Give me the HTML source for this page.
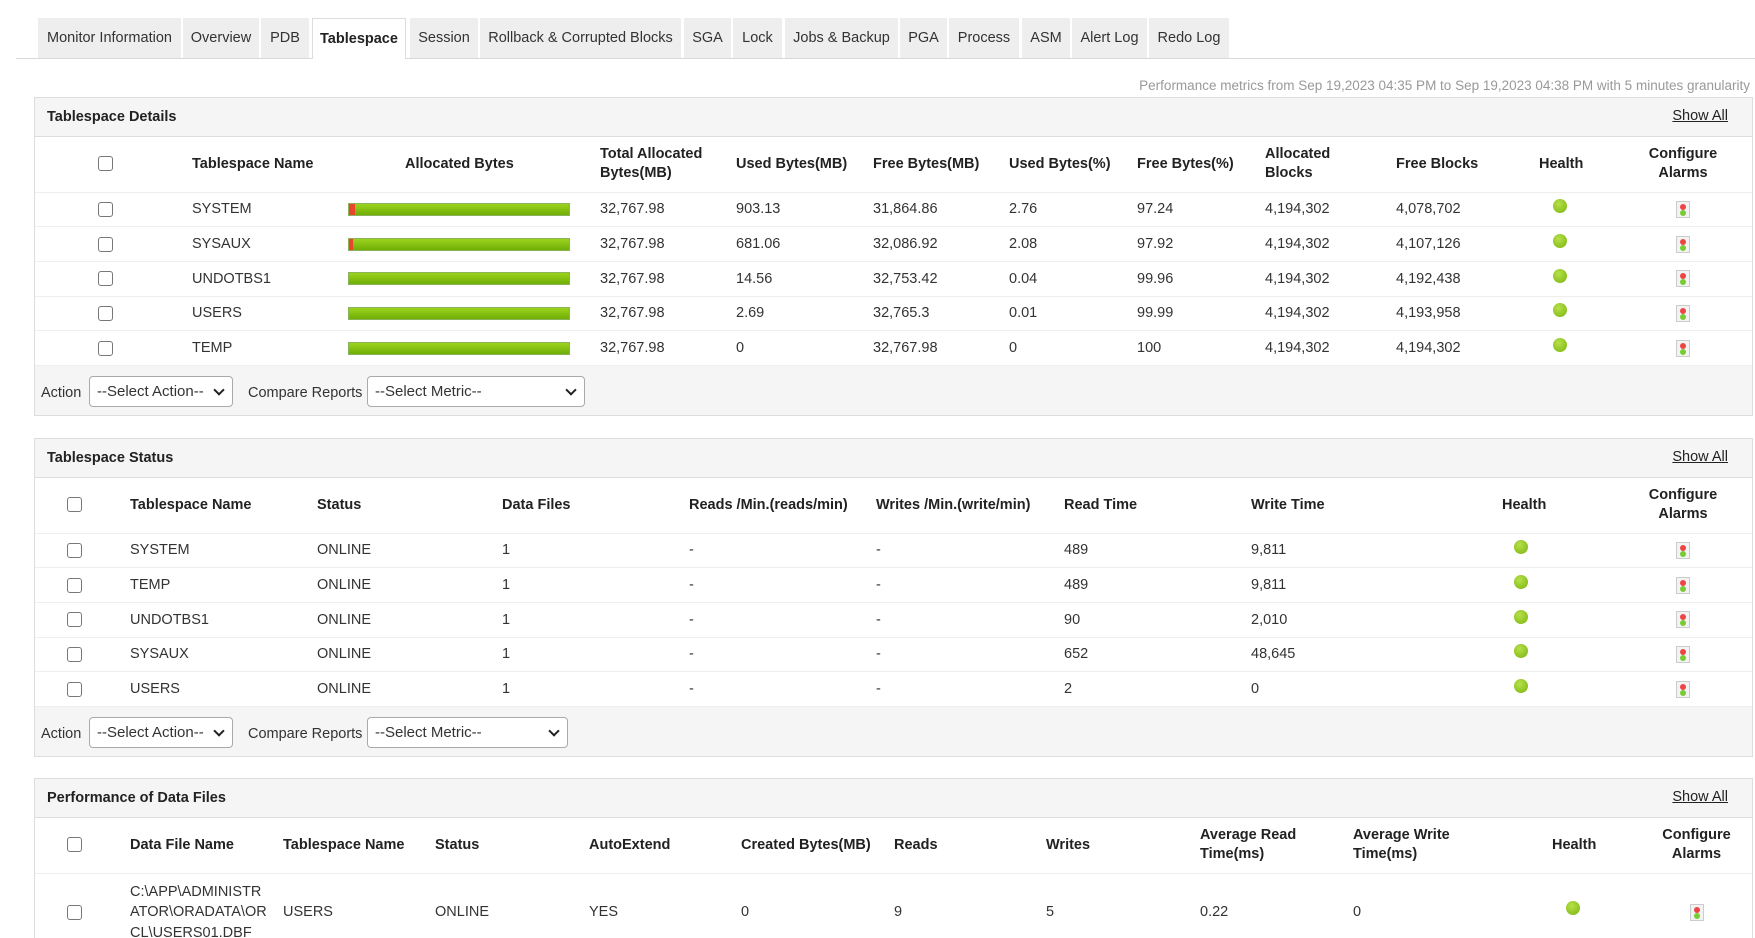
<!DOCTYPE html>
<html style="height:938px;overflow:hidden"><head><meta charset="utf-8"><style>
*{box-sizing:border-box;margin:0;padding:0}
body{width:1755px;height:938px;overflow:hidden;background:#fff;font-family:"Liberation Sans",Arial,sans-serif;font-size:14.5px;color:#333;position:relative}
.tabline{position:absolute;left:16px;right:0;top:58px;border-top:1px solid #d8d8d8}
.tab{position:absolute;top:18px;height:40px;line-height:40px;background:#eee;text-align:center;color:#333}
.tab.a{background:#fff;border:1px solid #ddd;border-bottom:none;font-weight:bold;height:41px;z-index:2;color:#222}
.info{position:absolute;right:5px;top:78px;color:#999;font-size:13.5px}
.panel{position:absolute;left:34px;width:1719px;border:1px solid #ddd}
.ph{height:39px;background:#f5f5f5;border-bottom:1px solid #ddd;position:relative}
.ph b{position:absolute;left:12px;top:11px;font-size:14.5px;color:#222}
.ph u{position:absolute;right:24px;top:10px;color:#222}
table{border-collapse:collapse;table-layout:fixed;width:1717px}
td,th{padding:0;text-align:left;vertical-align:middle;font-weight:normal}
th{font-weight:bold;color:#222;line-height:19px}
tr.h{height:55px}
tr.r{height:34.7px;border-top:1px solid #eee}
.cb{display:inline-block;width:15px;height:15px;border:1px solid #777;border-radius:3px;vertical-align:middle;background:#fff}
.bar{height:13px;width:222px;background:linear-gradient(#9cd21e,#6fae06);border:1px solid #8bb35a;position:relative}
.bar i{position:absolute;left:0;top:0;bottom:0;background:#e8452c}
.dot{display:inline-block;width:14px;height:14px;border-radius:50%;background:radial-gradient(circle at 40% 35%,#b6e04a,#7ab40e);position:relative;top:-1px}
.al{display:inline-block;width:14px;height:17px;border:1px solid #ccc;background:#f3f3f3;position:relative;vertical-align:middle}
.al:before{content:"";position:absolute;left:3px;top:2px;width:6px;height:6px;border-radius:50%;background:#e44}
.al:after{content:"";position:absolute;left:3px;top:8px;width:6px;height:6px;border-radius:50%;background:#7c3}
.c{text-align:center}
.act{height:50px;background:#f5f5f5;position:relative;border-top:1px solid #eee}
.act span{position:absolute;top:19px}
.sel{position:absolute;top:10px;height:31px;border:1px solid #aaa;border-radius:4px;background:#fff;padding-left:7px;line-height:29px;font-size:15px;color:#333}
.sel:after{content:"";position:absolute;right:9px;top:9px;width:6px;height:6px;border-right:2px solid #222;border-bottom:2px solid #222;transform:rotate(45deg)}
</style></head><body>
<div class="tabline"></div>
<div class="tab" style="left:38px;width:143px">Monitor Information</div>
<div class="tab" style="left:183px;width:76px">Overview</div>
<div class="tab" style="left:261px;width:48px">PDB</div>
<div class="tab a" style="left:312px;width:94px">Tablespace</div>
<div class="tab" style="left:410px;width:68px">Session</div>
<div class="tab" style="left:480px;width:201px">Rollback &amp; Corrupted Blocks</div>
<div class="tab" style="left:684px;width:47px">SGA</div>
<div class="tab" style="left:733px;width:49px">Lock</div>
<div class="tab" style="left:785px;width:113px">Jobs &amp; Backup</div>
<div class="tab" style="left:900px;width:47px">PGA</div>
<div class="tab" style="left:949px;width:70px">Process</div>
<div class="tab" style="left:1022px;width:48px">ASM</div>
<div class="tab" style="left:1072px;width:75px">Alert Log</div>
<div class="tab" style="left:1149px;width:80px">Redo Log</div>
<div class="info">Performance metrics from Sep 19,2023 04:35 PM to Sep 19,2023 04:38 PM with 5 minutes granularity</div>

<div class="panel" style="top:97px">
<div class="ph"><b>Tablespace Details</b><u>Show All</u></div>
<table>
<colgroup><col style="width:157px"><col style="width:156px"><col style="width:252px"><col style="width:136px"><col style="width:137px"><col style="width:136px"><col style="width:128px"><col style="width:128px"><col style="width:131px"><col style="width:115px"><col style="width:103px"><col style="width:138px"></colgroup>
<tr class="h"><th style="padding-left:63px"><span class="cb"></span></th><th>Tablespace Name</th><th style="padding-left:57px">Allocated Bytes</th><th>Total Allocated<br>Bytes(MB)</th><th>Used Bytes(MB)</th><th>Free Bytes(MB)</th><th>Used Bytes(%)</th><th>Free Bytes(%)</th><th>Allocated<br>Blocks</th><th>Free Blocks</th><th style="padding-left:28px">Health</th><th class="c">Configure<br>Alarms</th></tr>
<tr class="r"><td style="padding-left:63px"><span class="cb"></span></td><td>SYSTEM</td><td><div class="bar"><i style="width:6px"></i></div></td><td>32,767.98</td><td>903.13</td><td>31,864.86</td><td>2.76</td><td>97.24</td><td>4,194,302</td><td>4,078,702</td><td style="padding-left:42px"><span class="dot"></span></td><td class="c"><span class="al"></span></td></tr>
<tr class="r"><td style="padding-left:63px"><span class="cb"></span></td><td>SYSAUX</td><td><div class="bar"><i style="width:4px"></i></div></td><td>32,767.98</td><td>681.06</td><td>32,086.92</td><td>2.08</td><td>97.92</td><td>4,194,302</td><td>4,107,126</td><td style="padding-left:42px"><span class="dot"></span></td><td class="c"><span class="al"></span></td></tr>
<tr class="r"><td style="padding-left:63px"><span class="cb"></span></td><td>UNDOTBS1</td><td><div class="bar"></div></td><td>32,767.98</td><td>14.56</td><td>32,753.42</td><td>0.04</td><td>99.96</td><td>4,194,302</td><td>4,192,438</td><td style="padding-left:42px"><span class="dot"></span></td><td class="c"><span class="al"></span></td></tr>
<tr class="r"><td style="padding-left:63px"><span class="cb"></span></td><td>USERS</td><td><div class="bar"></div></td><td>32,767.98</td><td>2.69</td><td>32,765.3</td><td>0.01</td><td>99.99</td><td>4,194,302</td><td>4,193,958</td><td style="padding-left:42px"><span class="dot"></span></td><td class="c"><span class="al"></span></td></tr>
<tr class="r"><td style="padding-left:63px"><span class="cb"></span></td><td>TEMP</td><td><div class="bar"></div></td><td>32,767.98</td><td>0</td><td>32,767.98</td><td>0</td><td>100</td><td>4,194,302</td><td>4,194,302</td><td style="padding-left:42px"><span class="dot"></span></td><td class="c"><span class="al"></span></td></tr>
</table>
<div class="act"><span style="left:6px">Action</span><div class="sel" style="left:54px;width:144px">--Select Action--</div><span style="left:213px">Compare Reports</span><div class="sel" style="left:332px;width:218px">--Select Metric--</div></div>
</div>

<div class="panel" style="top:438px">
<div class="ph"><b>Tablespace Status</b><u>Show All</u></div>
<table>
<colgroup><col style="width:95px"><col style="width:187px"><col style="width:185px"><col style="width:187px"><col style="width:187px"><col style="width:188px"><col style="width:187px"><col style="width:220px"><col style="width:143px"><col style="width:138px"></colgroup>
<tr class="h"><th style="padding-left:32px"><span class="cb"></span></th><th>Tablespace Name</th><th>Status</th><th>Data Files</th><th>Reads /Min.(reads/min)</th><th>Writes /Min.(write/min)</th><th>Read Time</th><th>Write Time</th><th style="padding-left:31px">Health</th><th class="c">Configure<br>Alarms</th></tr>
<tr class="r"><td style="padding-left:32px"><span class="cb"></span></td><td>SYSTEM</td><td>ONLINE</td><td>1</td><td>-</td><td>-</td><td>489</td><td>9,811</td><td style="padding-left:43px"><span class="dot"></span></td><td class="c"><span class="al"></span></td></tr>
<tr class="r"><td style="padding-left:32px"><span class="cb"></span></td><td>TEMP</td><td>ONLINE</td><td>1</td><td>-</td><td>-</td><td>489</td><td>9,811</td><td style="padding-left:43px"><span class="dot"></span></td><td class="c"><span class="al"></span></td></tr>
<tr class="r"><td style="padding-left:32px"><span class="cb"></span></td><td>UNDOTBS1</td><td>ONLINE</td><td>1</td><td>-</td><td>-</td><td>90</td><td>2,010</td><td style="padding-left:43px"><span class="dot"></span></td><td class="c"><span class="al"></span></td></tr>
<tr class="r"><td style="padding-left:32px"><span class="cb"></span></td><td>SYSAUX</td><td>ONLINE</td><td>1</td><td>-</td><td>-</td><td>652</td><td>48,645</td><td style="padding-left:43px"><span class="dot"></span></td><td class="c"><span class="al"></span></td></tr>
<tr class="r"><td style="padding-left:32px"><span class="cb"></span></td><td>USERS</td><td>ONLINE</td><td>1</td><td>-</td><td>-</td><td>2</td><td>0</td><td style="padding-left:43px"><span class="dot"></span></td><td class="c"><span class="al"></span></td></tr>
</table>
<div class="act"><span style="left:6px">Action</span><div class="sel" style="left:54px;width:144px">--Select Action--</div><span style="left:213px">Compare Reports</span><div class="sel" style="left:332px;width:201px">--Select Metric--</div></div>
</div>

<div class="panel" style="top:778px;height:170px;border-bottom:none">
<div class="ph"><b>Performance of Data Files</b><u>Show All</u></div>
<table>
<colgroup><col style="width:95px"><col style="width:153px"><col style="width:152px"><col style="width:154px"><col style="width:152px"><col style="width:153px"><col style="width:152px"><col style="width:154px"><col style="width:153px"><col style="width:178px"><col style="width:110px"><col style="width:111px"></colgroup>
<tr class="h"><th style="padding-left:32px"><span class="cb"></span></th><th>Data File Name</th><th>Tablespace Name</th><th>Status</th><th>AutoExtend</th><th>Created Bytes(MB)</th><th>Reads</th><th>Writes</th><th>Average Read<br>Time(ms)</th><th>Average Write<br>Time(ms)</th><th style="padding-left:21px">Health</th><th class="c">Configure<br>Alarms</th></tr>
<tr class="r" style="height:78px;line-height:20.5px"><td style="padding-left:32px"><span class="cb"></span></td><td>C:\APP\ADMINISTR<br>ATOR\ORADATA\OR<br>CL\USERS01.DBF</td><td>USERS</td><td>ONLINE</td><td>YES</td><td>0</td><td>9</td><td>5</td><td>0.22</td><td>0</td><td style="padding-left:35px"><span class="dot"></span></td><td class="c"><span class="al"></span></td></tr>
</table>
</div>
</body></html>
